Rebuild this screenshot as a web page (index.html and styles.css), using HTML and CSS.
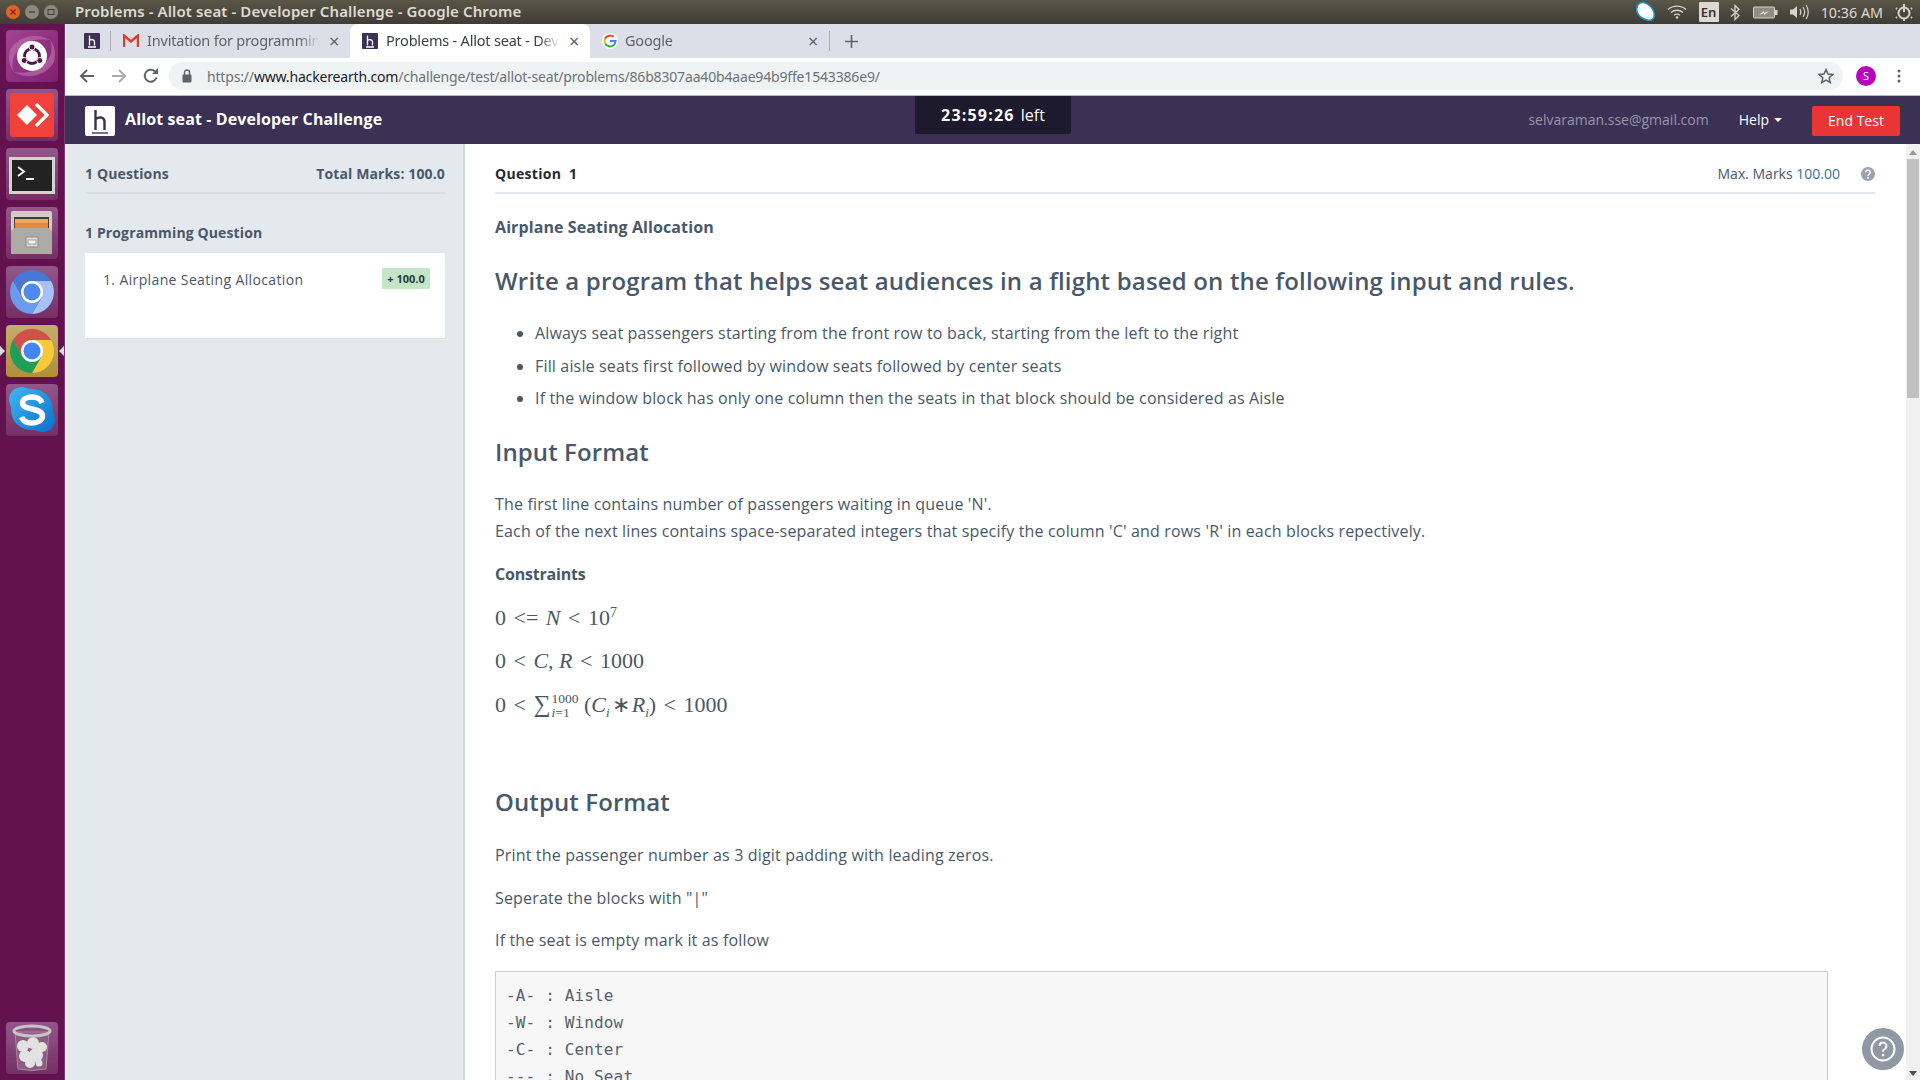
FILE: index.html
```html
<!DOCTYPE html>
<html lang="en">
<head>
<meta charset="utf-8">
<title>Problems - Allot seat - Developer Challenge</title>
<link rel="stylesheet" href="styles.css">
</head>
<body>
<div class="topbar">
  <div class="win-btns">
    <span class="wb wb-close"><svg width="8" height="8" viewBox="0 0 8 8"><path d="M1.5 1.5l5 5M6.5 1.5l-5 5" stroke="#7a2408" stroke-width="1.3"/></svg></span>
    <span class="wb"><svg width="8" height="8" viewBox="0 0 8 8"><path d="M1 4h6" stroke="#3d3c36" stroke-width="1.2"/></svg></span>
    <span class="wb"><svg width="8" height="8" viewBox="0 0 8 8"><rect x="1" y="1.5" width="6" height="5" fill="none" stroke="#3d3c36"/></svg></span>
  </div>
  <div class="win-title">Problems - Allot seat - Developer Challenge - Google Chrome</div>
  <div class="tray">
    <svg class="t-skype" width="22" height="22" viewBox="0 0 22 22"><path d="M6 2c3-1 7 0 10 3s5 7 4 11c-1 3-4 4-7 3-4-1-7-3-9-6S2 4 6 2z" fill="#fff" stroke="#1b8fd0" stroke-width="1.6"/></svg>
    <svg class="t-wifi" width="20" height="14" viewBox="0 0 20 14"><path d="M1 4.5c5-4.500 13-4.500 18 0M4 7.500c3.500-3 8.500-3 12 0M7 10.200c2-1.500 4-1.500 6 0" fill="none" stroke="#d6d3cb" stroke-width="1.300"/><circle cx="10" cy="12.500" r="1.300" fill="#d6d3cb"/></svg>
    <span class="t-en">En</span>
    <svg class="t-bt" width="10" height="17" viewBox="0 0 10 17"><path d="M1 4.500l8 7-4 4V1.500l4 4-8 7" fill="none" stroke="#d6d3cb" stroke-width="1.300"/></svg>
    <svg class="t-bat" width="25" height="13" viewBox="0 0 25 13"><rect x="0.500" y="1" width="21" height="11" rx="1" fill="#8f8c83" stroke="#d6d3cb"/><rect x="22" y="4" width="2.500" height="5" fill="#d6d3cb"/><path d="M6 9l5-2v2l5-4-5 2V5z" fill="#fff"/></svg>
    <svg class="t-vol" width="20" height="16" viewBox="0 0 20 16"><path d="M1 5.500h3l4-3.500v12l-4-3.500H1z" fill="#d6d3cb"/><path d="M11 5c1.200 2 1.200 4 0 6M14 3c2 3 2 7 0 10M17 1c3 4 3 10 0 14" fill="none" stroke="#d6d3cb" stroke-width="1.200"/></svg>
    <span class="t-time">10:36 AM</span>
    <svg class="t-power" width="18" height="18" viewBox="0 0 18 18"><circle cx="9" cy="10" r="5.500" fill="none" stroke="#d6d3cb" stroke-width="2"/><path d="M9 1v8" stroke="#d6d3cb" stroke-width="2"/><path d="M2 6L1 5M16 6l1-1M2 14l-1 1M16 14l1 1M9 16v2" stroke="#d6d3cb" stroke-width="2"/></svg>
  </div>
</div>

<div class="desktop">
  <nav class="launcher">
    <div class="tile tile-ubuntu">
      <svg width="52" height="52" viewBox="0 0 52 52"><path d="M4 20C12 6 30 2 44 10 32 8 16 10 8 26 6 32 6 38 8 42 3 36 2 28 4 20zM48 32C40 46 22 50 8 42c12 2 28 0 36-16 2-6 2-12 0-16 5 6 6 14 4 22z" fill="#c77bb3" opacity=".55"/><circle cx="26" cy="26" r="15" fill="#fff"/><circle cx="26" cy="26" r="7.500" fill="none" stroke="#4f1745" stroke-width="2.800"/><circle cx="26" cy="17" r="3" fill="#4f1745" stroke="#fff"/><circle cx="18.200" cy="30.500" r="3" fill="#4f1745" stroke="#fff"/><circle cx="33.800" cy="30.500" r="3" fill="#4f1745" stroke="#fff"/></svg>
    </div>
    <div class="tile">
      <svg width="52" height="52" viewBox="0 0 52 52"><rect x="4" y="4" width="44" height="44" rx="3" fill="#f0413a"/><path d="M21 16l10 10-10 10-10-10z" fill="#fff"/><path d="M30 15l11 11-11 11" fill="none" stroke="#fff" stroke-width="3.200"/></svg>
    </div>
    <div class="tile">
      <svg width="52" height="52" viewBox="0 0 52 52"><rect x="3" y="9" width="46" height="37" fill="#d3d3d0"/><rect x="6" y="12" width="40" height="31" fill="#222"/><path d="M12 19l6 4.500-6 4.500" fill="none" stroke="#f2f2f2" stroke-width="2"/><path d="M20 31h8" stroke="#f2f2f2" stroke-width="2"/></svg>
    </div>
    <div class="tile">
      <svg width="52" height="52" viewBox="0 0 52 52"><rect x="5" y="4" width="41" height="22" rx="2" fill="#cfcec9"/><rect x="8" y="10" width="35" height="12" fill="#4f3a2a"/><rect x="9" y="12" width="33" height="4" fill="#f0a860"/><rect x="9" y="16" width="33" height="5" fill="#e8893f"/><path d="M8 21h35l3 3v23H5V24z" fill="#acaba6"/><rect x="20" y="30" width="12" height="10" rx="1" fill="#ddd" stroke="#8a8985"/><rect x="22" y="33" width="8" height="4" fill="#f5f5f5" stroke="#777" stroke-width=".6"/></svg>
    </div>
    <div class="tile">
      <svg width="52" height="52" viewBox="0 0 52 52"><path d="M45 15A22 22 0 0 0 7 15L16.500 31.500 26 15z" fill="#4a76d4"/><path d="M26 48A22 22 0 0 0 45 15H26L35.500 31.500z" fill="#a5c3f8"/><path d="M7 15A22 22 0 0 0 26 48L35.500 31.500H16.500z" fill="#6b9bee"/><circle cx="26" cy="26" r="11" fill="#fff"/><circle cx="26" cy="26" r="8.500" fill="#4d8af0"/></svg>
    </div>
    <div class="tile tile-active">
      <svg width="52" height="52" viewBox="0 0 52 52"><path d="M45 15A22 22 0 0 0 7 15L16.500 31.500 26 15z" fill="#cf5148"/><path d="M26 48A22 22 0 0 0 45 15H26L35.500 31.500z" fill="#fbc83a"/><path d="M7 15A22 22 0 0 0 26 48L35.500 31.500H16.500z" fill="#1e9e58"/><circle cx="26" cy="26" r="11" fill="#fff"/><circle cx="26" cy="26" r="8.500" fill="#4285f4"/></svg>
      <i class="pip pip-l"></i><i class="pip pip-r"></i>
    </div>
    <div class="tile">
      <svg width="52" height="52" viewBox="0 0 52 52"><defs><linearGradient id="sk" x1="0" y1="0" x2="1" y2="1"><stop offset="0" stop-color="#3db7f0"/><stop offset="1" stop-color="#0a70cc"/></linearGradient></defs><path d="M16 3c3 0 5 2 10 2 12 0 21 9 21 21 0 4 2 6 2 10 0 7-5 12-12 12-3 0-6-2-11-2C14 46 5 37 5 25c0-4-2-6-2-9C3 8 9 3 16 3z" fill="url(#sk)"/><path d="M36 19c-1.500-4-5-6-10-6-6 0-9.500 2.500-9.500 6 0 8 20 4 20 13 0 4-4.500 7-10.500 7-5 0-9-2-10.500-6" fill="none" stroke="#fff" stroke-width="5.500"/></svg>
    </div>
    <div class="tile tile-trash">
      <svg width="52" height="52" viewBox="0 0 52 52"><path d="M9 10l3 37q14 3 28 0l3-37z" fill="#8d5a80" stroke="#a88a9f"/><g fill="#e2e2e2"><circle cx="17" cy="24" r="6"/><circle cx="27" cy="21" r="6"/><circle cx="36" cy="25" r="5"/><circle cx="19" cy="34" r="6"/><circle cx="30" cy="33" r="7"/><circle cx="24" cy="41" r="5"/><circle cx="33" cy="41" r="3.500"/></g><ellipse cx="26" cy="9" rx="18" ry="5" fill="none" stroke="#c8c6c4" stroke-width="3"/></svg>
    </div>
  </nav>

  <div class="browser">
    <div class="tabstrip">
      <div class="tab tab-pinned">
        <svg class="hfav" width="16" height="16" viewBox="0 0 16 16"><rect width="16" height="16" rx="1" fill="#3a3154"/><path d="M5.500 2.500v10M5.500 7.500c2-1.500 5-1 5 1.500v3.500M4 14h8" fill="none" stroke="#fff" stroke-width="1.300"/></svg>
      </div>
      <div class="tab">
        <svg width="16" height="14" viewBox="0 0 16 14"><path d="M1 13V1.500l7 6 7-6V13" fill="none" stroke="#dd3b2d" stroke-width="2.400"/></svg>
        <span class="tab-title">Invitation for programming challenge</span>
        <span class="tab-x">×</span>
      </div>
      <div class="tab tab-on">
        <svg class="hfav" width="16" height="16" viewBox="0 0 16 16"><rect width="16" height="16" rx="1" fill="#3a3154"/><path d="M5.500 2.500v10M5.500 7.500c2-1.500 5-1 5 1.500v3.500M4 14h8" fill="none" stroke="#fff" stroke-width="1.300"/></svg>
        <span class="tab-title">Problems - Allot seat - Developer Challenge</span>
        <span class="tab-x">×</span>
      </div>
      <div class="tab tab-g">
        <svg width="16" height="16" viewBox="0 0 16 16"><circle cx="8" cy="8" r="8" fill="#fff"/><path d="M8 8h5.500a5.500 5.500 0 0 1-1.800 3.900" fill="none" stroke="#4285f4" stroke-width="2"/><path d="M11.700 11.900A5.500 5.500 0 0 1 3.100 10.500" fill="none" stroke="#34a853" stroke-width="2"/><path d="M3.100 10.500a5.500 5.500 0 0 1 0-5" fill="none" stroke="#fbbc05" stroke-width="2"/><path d="M3.100 5.500a5.500 5.500 0 0 1 8.600-1.400" fill="none" stroke="#ea4335" stroke-width="2"/></svg>
        <span class="tab-title">Google</span>
        <span class="tab-x">×</span>
      </div>
      <div class="tab-sep"></div>
      <svg class="tab-plus" width="13" height="13" viewBox="0 0 13 13"><path d="M6.500 0v13M0 6.500h13" stroke="#5f6368" stroke-width="1.600"/></svg>
    </div>

    <div class="toolbar">
      <svg class="tb-i" width="16" height="16" viewBox="0 0 16 16"><path d="M15 8H2M8 2L2 8l6 6" fill="none" stroke="#5f6368" stroke-width="2"/></svg>
      <svg class="tb-i tb-fwd" width="16" height="16" viewBox="0 0 16 16"><path d="M1 8h13M8 2l6 6-6 6" fill="none" stroke="#a9adb2" stroke-width="2"/></svg>
      <svg class="tb-i" width="16" height="16" viewBox="0 0 16 16"><path d="M13.500 9.500A6 6 0 1 1 12 3.500" fill="none" stroke="#5f6368" stroke-width="2"/><path d="M9 6h6V0z" fill="#5f6368"/></svg>
      <div class="omni">
        <svg width="10" height="14" viewBox="0 0 10 14"><rect x="0.500" y="5.500" width="9" height="8" rx="1" fill="#5f6368"/><path d="M2.500 6V3.500a2.500 2.500 0 0 1 5 0V6" fill="none" stroke="#5f6368" stroke-width="1.400"/></svg>
        <span class="url"><span class="url-d">https://</span><span class="url-h">www.hackerearth.com</span><span class="url-d">/challenge/test/allot-seat/problems/86b8307aa40b4aae94b9ffe1543386e9/</span></span>
        <svg class="star" width="16" height="16" viewBox="0 0 16 16"><path d="M8 1.500l2 4.500 4.800.5-3.600 3.200 1 4.800L8 12l-4.200 2.500 1-4.800L1.200 6.500 6 6z" fill="none" stroke="#5f6368" stroke-width="1.500"/></svg>
      </div>
      <span class="avatar">S</span>
      <svg class="dots" width="4" height="14" viewBox="0 0 4 14"><circle cx="2" cy="2" r="1.500" fill="#5f6368"/><circle cx="2" cy="7" r="1.500" fill="#5f6368"/><circle cx="2" cy="12" r="1.500" fill="#5f6368"/></svg>
    </div>

    <header class="apphead">
      <svg class="logo" width="30" height="30" viewBox="0 0 30 30"><rect width="30" height="30" rx="2" fill="#fff"/><path d="M10.500 4v20M10.500 13c4-2.500 9-2 9 2.500V24" fill="none" stroke="#3a3154" stroke-width="2.400"/><path d="M7 27h16" stroke="#3a3154" stroke-width="1.400"/></svg>
      <div class="app-title">Allot seat - Developer Challenge</div>
      <div class="timer"><b>23:59:26</b> left</div>
      <div class="app-right">
        <span class="email">selvaraman.sse@gmail.com</span>
        <span class="help">Help<i class="caret"></i></span>
        <span class="endbtn">End Test</span>
      </div>
    </header>

    <div class="content">
      <aside class="sidebar">
        <div class="side-row"><span>1 Questions</span><span>Total Marks: 100.0</span></div>
        <div class="side-sec">1 Programming Question</div>
        <div class="side-card"><span class="side-q">1. Airplane Seating Allocation</span><span class="badge">+ 100.0</span></div>
      </aside>
      <main class="main">
        <div class="q-row"><span class="q-no">Question&nbsp; 1</span><span class="q-marks">Max. Marks <span class="q-val">100.00</span></span>
          <svg class="q-help" width="14" height="14" viewBox="0 0 14 14"><circle cx="7" cy="7" r="7" fill="#99a3ad"/><path d="M4.800 5.300a2.200 2.200 0 1 1 3.400 1.800c-.8.500-1.200.9-1.200 1.700" fill="none" stroke="#fff" stroke-width="1.500"/><circle cx="7" cy="10.800" r="1" fill="#fff"/></svg>
        </div>
        <article class="desc">
          <div class="d-title">Airplane Seating Allocation</div>
          <h1>Write a program that helps seat audiences in a flight based on the following input and rules.</h1>
          <ul>
            <li>Always seat passengers starting from the front row to back, starting from the left to the right</li>
            <li>Fill aisle seats first followed by window seats followed by center seats</li>
            <li>If the window block has only one column then the seats in that block should be considered as Aisle</li>
          </ul>
          <h2>Input Format</h2>
          <p class="p-first">The first line contains number of passengers waiting in queue 'N'.<br>Each of the next lines contains space-separated integers that specify the column 'C' and rows 'R' in each blocks repectively.</p>
          <p class="p-strong">Constraints</p>
          <div class="math m-first">0 <span class="op">&lt;=</span> <i>N</i> <span class="op">&lt;</span> 10<sup>7</sup></div>
          <div class="math">0 <span class="op">&lt;</span> <i>C</i>, <i>R</i> <span class="op">&lt;</span> 1000</div>
          <div class="math">0 <span class="op">&lt;</span> <span class="sum">∑</span><span class="limits"><span>1000</span><span><i>i</i>=1</span></span> (<i>C<sub>i</sub></i><span class="op">∗</span><i>R<sub>i</sub></i>) <span class="op">&lt;</span> 1000</div>
          <h2 class="h-out">Output Format</h2>
          <p class="p-a">Print the passenger number as 3 digit padding with leading zeros.</p>
          <p class="p-b">Seperate the blocks with "|"</p>
          <p class="p-b">If the seat is empty mark it as follow</p>
          <pre>-A- : Aisle
-W- : Window
-C- : Center
--- : No Seat</pre>
        </article>
        <div class="float-help"><svg width="26" height="26" viewBox="0 0 26 26"><circle cx="13" cy="13" r="11.500" fill="none" stroke="#fff" stroke-width="2"/><path d="M9.500 10a3.500 3.500 0 1 1 5.500 2.800c-1.300.9-2 1.500-2 2.700" fill="none" stroke="#fff" stroke-width="2"/><circle cx="13" cy="19" r="1.300" fill="#fff"/></svg></div>
      </main>
      <div class="scrollbar">
        <i class="arr arr-up"></i>
        <div class="thumb"></div>
        <i class="arr arr-dn"></i>
      </div>
    </div>
  </div>
</div>
</body>
</html>
```
FILE: styles.css
```css
* { box-sizing: border-box; }
html, body { margin: 0; height: 100%; overflow: hidden; }
body { width: 1920px; height: 1080px; display: flex; flex-direction: column; font-family: "Open Sans", "Noto Sans", sans-serif; color: #48586a; background: #fff; }

.topbar { height: 24px; flex: none; display: flex; align-items: center; background: linear-gradient(#5a5648, #3e3c35); color: #dfdbd2; }
.win-btns { display: flex; gap: 5px; padding-left: 6px; width: 75px; }
.wb { width: 14px; height: 14px; border-radius: 50%; background: #8b887d; display: flex; align-items: center; justify-content: center; }
.wb-close { background: #e2622a; }
.win-title { font: 600 15px/24px "Noto Sans", sans-serif; letter-spacing: .1px; margin-top: -2px; }
.tray { margin-left: auto; display: flex; align-items: center; height: 24px; color: #dfdbd2; padding-right: 7px; }
.t-skype { margin-right: 11px; }
.t-wifi { margin-right: 12px; }
.t-en { width: 20px; height: 20px; background: #dcd9d1; color: #333; border-radius: 1px; font: 600 13px/20px "Noto Sans", sans-serif; text-align: center; margin-right: 11px; }
.t-bt { margin-right: 13px; }
.t-bat { margin-right: 11px; }
.t-vol { margin-right: 12px; }
.t-time { font: 400 14.300px "Noto Sans", sans-serif; margin-right: 12px; }

.desktop { flex: 1; display: flex; min-height: 0; }
.launcher { width: 65px; flex: none; background: #63124f; border-right: 1px solid #7d3a6c; display: flex; flex-direction: column; gap: 7px; padding: 6px 0 6px 6px; }
.tile { width: 52px; height: 52px; border-radius: 4px; background: linear-gradient(#92578a, #752f66); position: relative; flex: none; }
.tile svg { display: block; }
.tile-ubuntu { background: linear-gradient(135deg, #a14592, #7f1f72); }
.tile-active { background: linear-gradient(#c4ad6e, #b08f3c); }
.tile-trash { margin-top: auto; }
.pip { position: absolute; top: 21px; width: 0; height: 0; border-top: 5px solid transparent; border-bottom: 5px solid transparent; }
.pip-l { left: -6px; border-left: 5px solid #ddd; }
.pip-r { right: -6px; border-right: 5px solid #ddd; }

.browser { flex: 1; min-width: 0; display: flex; flex-direction: column; }
.tabstrip { height: 34px; flex: none; background: #dcdfe7; display: flex; align-items: center; }
.tab { width: 239px; height: 34px; display: flex; align-items: center; gap: 8px; padding: 0 10px 0 12px; font: 400 14.500px "Noto Sans", sans-serif; letter-spacing: -.2px; color: #5f6368; position: relative; flex: none; }
.tab svg { flex: none; }
.tab-pinned { width: 46px; padding-left: 19px; }
.tab-pinned::after { content: ""; position: absolute; right: 0; top: 7px; height: 20px; width: 1px; background: #a9abb2; }
.tab-on { background: #fff; width: 240px; border-radius: 8px 8px 0 0; color: #3c4043; }
.tab-g { gap: 7px; }
.tab-title { flex: 1; min-width: 0; white-space: nowrap; overflow: hidden; margin-top: -2px; -webkit-mask-image: linear-gradient(90deg, #000 88%, transparent); mask-image: linear-gradient(90deg, #000 88%, transparent); }
.tab-x { font-size: 18px; line-height: 18px; color: #5f6368; width: 12px; text-align: center; }
.tab-sep { width: 1px; height: 20px; background: #a9abb2; }
.tab-plus { margin-left: 15px; }

.toolbar { height: 38px; flex: none; background: #fff; border-bottom: 1px solid #b9bbbf; display: flex; align-items: center; padding: 0 0 1px 14px; }
.tb-i { margin-right: 16px; flex: none; }
.omni { margin-left: -6px; width: 1674px; height: 28px; border-radius: 14px; background: #eff3f4; display: flex; align-items: center; padding: 0 9px 0 13px; }
.url { margin-left: 15px; font: 400 14px "Noto Sans", sans-serif; letter-spacing: -.17px; white-space: nowrap; }
.url-d { color: #6e7276; }
.url-h { color: #202124; }
.star { margin-left: auto; }
.avatar { width: 20px; height: 20px; border-radius: 50%; background: #b900bd; color: #fff; font: 400 11px/20px "Noto Sans", sans-serif; text-align: center; margin-left: 13px; }
.dots { margin-left: 21px; }

.apphead { height: 48px; flex: none; background: #3a3154; display: flex; align-items: flex-start; padding-left: 20px; position: relative; }
.logo { margin-top: 10px; flex: none; }
.app-title { margin: 11px 0 0 10px; color: #fff; font: 700 16px/24px "Open Sans", sans-serif; letter-spacing: .115px; }
.timer { position: absolute; left: 850px; top: 0; width: 156px; height: 38px; background: #1d1a2e; border-radius: 0 0 2px 2px; color: #fff; font-size: 16px; line-height: 38px; text-align: center; }
.timer b { font-weight: 700; letter-spacing: 1.200px; margin-right: 2px; }
.app-right { margin-left: auto; display: flex; align-items: center; height: 48px; padding: 0 20px 0 0; font-size: 14px; }
.email { color: #9a96a9; margin-right: 30px; margin-top: -1px; }
.help { color: #fff; margin-right: 30px; display: flex; align-items: center; gap: 5px; margin-top: -1px; }
.caret { width: 0; height: 0; border-left: 4px solid transparent; border-right: 4px solid transparent; border-top: 4px solid #fff; }
.endbtn { width: 88px; height: 30px; background: #e93535; border-radius: 2px; color: #fff; text-align: center; line-height: 30px; margin-top: 2px; }

.content { flex: 1; min-height: 0; display: flex; }
.sidebar { width: 400px; flex: none; background: #e4e9ed; border-right: 2px solid #d2d8dd; padding: 0 18px 0 20px; }
.side-row { height: 50px; padding-top: 18px; line-height: 24px; border-bottom: 2px solid #d7dde2; display: flex; justify-content: space-between; font-size: 14px; font-weight: 700; letter-spacing: .13px; color: #48586a; }
.side-sec { margin-top: 27px; line-height: 24px; font-size: 14px; font-weight: 700; letter-spacing: .13px; color: #48586a; }
.side-card { margin-top: 8px; height: 86px; background: #fff; border-bottom: 1px solid #dfe4e8; padding: 15px 15px 0 18px; display: flex; justify-content: space-between; align-items: flex-start; font-size: 14px; }
.side-q { line-height: 24px; font-weight: 500; letter-spacing: .37px; }
.badge { width: 48px; height: 21px; background: #c3e6c8; border-radius: 2px; font-size: 11px; font-weight: 700; line-height: 21px; text-align: center; color: #2a3a33; }

.main { flex: 1; min-width: 0; padding: 0 31px 0 30px; position: relative; overflow: hidden; }
.q-row { height: 50px; padding-top: 18px; line-height: 24px; border-bottom: 2px solid #e6e9ec; display: flex; align-items: flex-start; font-size: 14px; }
.q-no { font-weight: 700; letter-spacing: .3px; color: #1f2a36; }
.q-marks { margin-left: auto; color: #48586a; }
.q-val { color: #3d6e9e; }
.q-help { margin: 5px 0 0 21px; }
.desc { padding-right: 47px; font-size: 16px; letter-spacing: .165px; color: #48586a; }
.d-title { margin-top: 21px; font-weight: 700; font-size: 16px; line-height: 24px; letter-spacing: .09px; }
h1 { margin: 24px 0 0; font-size: 24px; line-height: 36px; font-weight: 600; letter-spacing: .17px; }
ul { margin: 18px 0 0; padding: 0 0 0 40px; }
li { line-height: 32.5px; }
h2 { margin: 19.5px 0 0; font-size: 24px; line-height: 36px; font-weight: 600; letter-spacing: .1px; }
p { margin: 0; line-height: 27px; }
.p-first { margin-top: 20.5px; }
.p-strong { margin-top: 16px; font-weight: 700; letter-spacing: -.2px; }
.math { font-family: "Liberation Serif", serif; font-size: 22px; line-height: 43.5px; height: 43.5px; color: #4a5866; letter-spacing: 0; }
.m-first { margin-top: 8px; }
.op { margin: 0 2px; }
.math sup { font-size: 14px; line-height: 0; }
.math sub { font-size: 13px; line-height: 0; }
.sum { font-size: 24px; }
.limits { display: inline-flex; flex-direction: column; vertical-align: middle; font-size: 13.500px; line-height: 14px; margin-left: 1px; }
.h-out { margin-top: 57.500px; }
.p-a { margin-top: 22.500px; }
.p-b { margin-top: 15.500px; }
pre { margin: 16.500px 0 0; padding: 10.500px 10px; background: #f7f7f7; border: 1px solid #ccc; font: 16px/27px "DejaVu Sans Mono", monospace; letter-spacing: .15px; color: #55616e; height: 200px; }
.float-help { position: absolute; right: 2px; bottom: 10px; width: 42px; height: 42px; border-radius: 50%; background: #8f99a3; display: flex; align-items: center; justify-content: center; }

.scrollbar { width: 14px; flex: none; background: #f1f1f1; display: flex; flex-direction: column; align-items: center; padding-top: 6px; }
.thumb { width: 12px; height: 239px; background: #c1c1c1; margin-top: 4px; }
.arr { width: 0; height: 0; border-left: 4px solid transparent; border-right: 4px solid transparent; }
.arr-up { border-bottom: 5px solid #999; }
.arr-dn { border-top: 5px solid #505050; margin-top: auto; margin-bottom: 4px; }
```
